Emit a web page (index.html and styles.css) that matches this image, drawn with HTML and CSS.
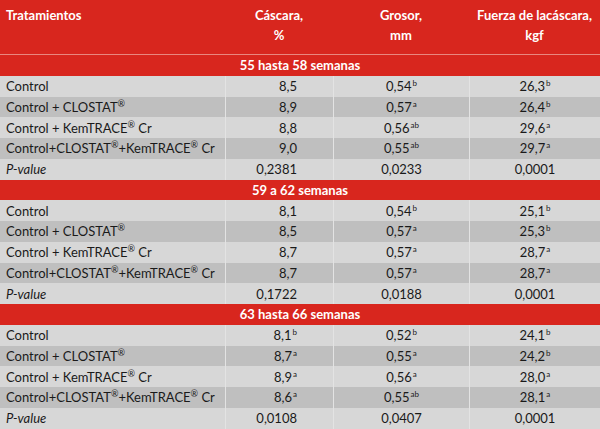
FILE: index.html
```html
<!DOCTYPE html>
<html lang="es">
<head>
<meta charset="utf-8">
<link rel="stylesheet" href="styles.css">
</head>
<body>
<table class="t">
  <colgroup>
    <col class="c1"><col class="c2"><col class="c3"><col class="c4">
  </colgroup>
  <thead>
    <tr class="head">
      <th class="left">Tratamientos</th>
      <th>Cáscara,<br>%</th>
      <th>Grosor,<br>mm</th>
      <th>Fuerza de lacáscara,<br>kgf</th>
    </tr>
  </thead>
  <tbody>
    <tr class="sec"><td colspan="4">55 hasta 58 semanas</td></tr>
    <tr class="l"><td class="name">Control</td><td class="num">8,5</td><td>0,54<sup>b</sup></td><td>26,3<sup>b</sup></td></tr>
    <tr class="d"><td class="name">Control + CLOSTAT<sup class="r">®</sup></td><td class="num">8,9</td><td>0,57<sup>a</sup></td><td>26,4<sup>b</sup></td></tr>
    <tr class="l"><td class="name">Control + KemTRACE<sup class="r">®</sup> Cr</td><td class="num">8,8</td><td>0,56<sup>ab</sup></td><td>29,6<sup>a</sup></td></tr>
    <tr class="d"><td class="name">Control+CLOSTAT<sup class="r">®</sup>+KemTRACE<sup class="r">®</sup> Cr</td><td class="num">9,0</td><td>0,55<sup>ab</sup></td><td>29,7<sup>a</sup></td></tr>
    <tr class="l"><td class="name pv">P-value</td><td class="num">0,2381</td><td>0,0233</td><td>0,0001</td></tr>

    <tr class="sec"><td colspan="4">59 a 62 semanas</td></tr>
    <tr class="l"><td class="name">Control</td><td class="num">8,1</td><td>0,54<sup>b</sup></td><td>25,1<sup>b</sup></td></tr>
    <tr class="d"><td class="name">Control + CLOSTAT<sup class="r">®</sup></td><td class="num">8,5</td><td>0,57<sup>a</sup></td><td>25,3<sup>b</sup></td></tr>
    <tr class="l"><td class="name">Control + KemTRACE<sup class="r">®</sup> Cr</td><td class="num">8,7</td><td>0,57<sup>a</sup></td><td>28,7<sup>a</sup></td></tr>
    <tr class="d"><td class="name">Control+CLOSTAT<sup class="r">®</sup>+KemTRACE<sup class="r">®</sup> Cr</td><td class="num">8,7</td><td>0,57<sup>a</sup></td><td>28,7<sup>a</sup></td></tr>
    <tr class="l"><td class="name pv">P-value</td><td class="num">0,1722</td><td>0,0188</td><td>0,0001</td></tr>

    <tr class="sec"><td colspan="4">63 hasta 66 semanas</td></tr>
    <tr class="l"><td class="name">Control</td><td class="num">8,1<sup>b</sup></td><td>0,52<sup>b</sup></td><td>24,1<sup>b</sup></td></tr>
    <tr class="d"><td class="name">Control + CLOSTAT<sup class="r">®</sup></td><td class="num">8,7<sup>a</sup></td><td>0,55<sup>a</sup></td><td>24,2<sup>b</sup></td></tr>
    <tr class="l"><td class="name">Control + KemTRACE<sup class="r">®</sup> Cr</td><td class="num">8,9<sup>a</sup></td><td>0,56<sup>a</sup></td><td>28,0<sup>a</sup></td></tr>
    <tr class="d"><td class="name">Control+CLOSTAT<sup class="r">®</sup>+KemTRACE<sup class="r">®</sup> Cr</td><td class="num">8,6<sup>a</sup></td><td>0,55<sup>ab</sup></td><td>28,1<sup>a</sup></td></tr>
    <tr class="l"><td class="name pv">P-value</td><td class="num">0,0108</td><td>0,0407</td><td>0,0001</td></tr>
  </tbody>
</table>
</body>
</html>
```
FILE: styles.css
```css
html, body {
  margin: 0;
  padding: 0;
  background: #ffffff;
}

.t {
  width: 600px;
  border-collapse: separate;
  border-spacing: 0;
  table-layout: fixed;
  font-family: Lato, "Open Sans", sans-serif;
  font-size: 13px;
  color: #1a1a1a;
}

.c1 { width: 225px; }
.c2 { width: 108px; }
.c3 { width: 136px; }
.c4 { width: 131px; }

.head th {
  background: #d8261e;
  color: #ffffff;
  font-weight: bold;
  text-align: center;
  vertical-align: top;
  height: 55px;
  padding: 5px 0 0 0;
  line-height: 20px;
  box-sizing: border-box;
  border-bottom: 1px solid #e9877f;
}

.head th.left {
  text-align: left;
  padding-left: 6px;
}

tbody tr { height: 20.75px; }

td {
  padding: 0;
  text-align: center;
  vertical-align: middle;
  line-height: 16px;
  white-space: nowrap;
  border-left: 1px solid #e3e3e3;
}

.sec td {
  background: #d8261e;
  color: #ffffff;
  font-weight: bold;
  border-left: none;
}

tr.l td { background: #d7d7d7; }
tr.d td { background: #bfbfbf; }

td.name {
  text-align: left;
  padding-left: 6px;
  border-left: none;
}

td.num {
  text-align: right;
  padding-right: 36px;
}

td.pv { font-style: italic; }

sup {
  font-size: 8px;
  line-height: 0;
  vertical-align: 5px;
  margin-left: 1px;
}

sup.r {
  font-size: 9px;
  margin-left: 0;
}
```
